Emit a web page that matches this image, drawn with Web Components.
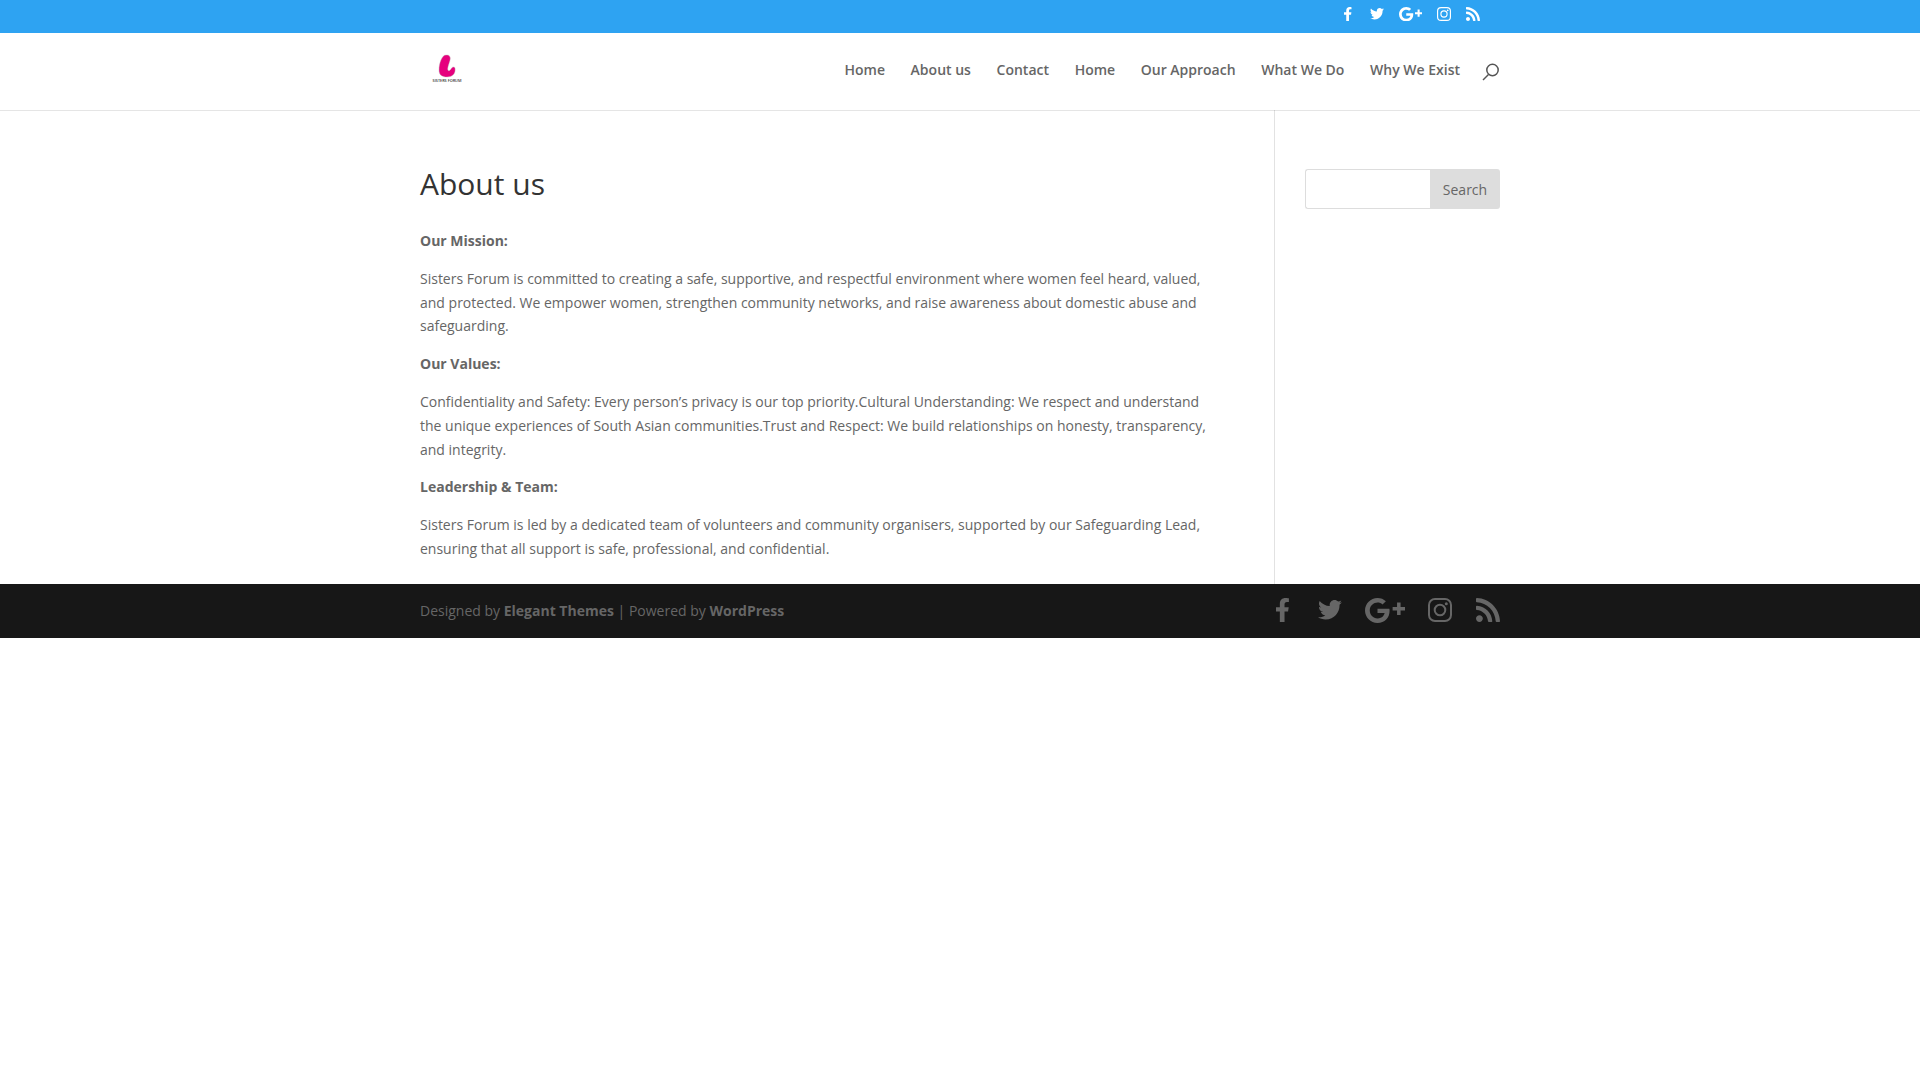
<!DOCTYPE html>
<html><head><meta charset="utf-8"><style>
html,body{margin:0;background:#fff;font-family:"Open Sans",sans-serif}
</style></head><body>
<top-bar></top-bar>
<main-header></main-header>
<page-content></page-content>
<page-footer></page-footer>
<script>
const ICONS={
fb:['22 0 271 512','<path d="M279 288l14-93h-89v-60c0-25 12-50 52-50h41V6s-37-6-72-6c-73 0-121 44-121 125v70H22v93h82v224h100V288z"/>'],
tw:['0 48 512 416','<path d="M459 152c.3 4.500.3 9 .3 13.600 0 138.700-105.600 298.600-298.600 298.600-59.500 0-114.700-17.200-161.100-47.100 8.400 1 16.600 1.300 25.300 1.300 49.100 0 94.200-16.600 130.300-44.800-46.100-1-84.800-31.200-98.100-72.800 6.500 1 13 1.600 19.800 1.600 9.400 0 18.800-1.300 27.600-3.600-48.100-9.700-84.100-52-84.100-103v-1.300c14 7.800 30.200 12.700 47.400 13.300-28.300-18.800-46.800-51-46.800-87.400 0-19.500 5.200-37.400 14.300-53 51.700 63.700 129.300 105.300 216.400 109.800-1.600-7.800-2.600-15.900-2.600-24 0-57.800 46.800-104.900 104.900-104.900 30.200 0 57.500 12.700 76.700 33.100 23.700-4.500 46.500-13.300 66.600-25.300-7.800 24-24.400 44.200-46.100 57.200 21.100-2.300 41.600-8.100 60.400-16.200-14.300 20.800-32.200 39.300-52.600 54.300z"/>'],
gp:['0 8 794 496','<path d="M488 261.800C488 403.300 391.100 504 248 504 110.800 504 0 393.200 0 256S110.800 8 248 8c66.800 0 123 24.500 166.300 64.900l-67.500 64.900C258.500 52.600 94.300 116.600 94.300 256c0 86.500 69.100 156.600 153.700 156.600 98.200 0 135-70.400 140.800-106.900H248v-85.300h236.100c2.300 12.700 3.900 24.900 3.900 41.400z"/><path d="M794 185h-88v-88h-70v88h-88v70h88v88h70v-88h88z"/>'],
ig:['0 0 24 24','<rect x="1" y="1" width="22" height="22" rx="6" fill="none" stroke="currentColor" stroke-width="2"/><circle cx="12" cy="12" r="5.300" fill="none" stroke="currentColor" stroke-width="2"/><circle cx="18.300" cy="5.700" r="1.500"/>'],
rss:['0 32 448 448','<path d="M128 416c0 35-29 64-64 64S0 451 0 416s29-64 64-64 64 29 64 64zm176 48c-8-155-132-279-287-288-9 0-17 7-17 16v48c0 8 7 15 15 16 111 7 201 97 209 209 1 8 8 15 16 15h48c9 0 17-8 16-16zm144 0C440 230 250 40 17 32 8 32 0 39 0 48v48c0 9 7 16 15 16 191 8 345 162 353 353 0 8 7 15 16 15h48c9 0 16-8 16-16z"/>']};
function icon(k,h,c,cls){const [vb,d]=ICONS[k];const p=vb.split(' ');const w=k=='tw'?h*1.0:h*p[2]/p[3];const hh=k=='tw'?w*p[3]/p[2]:h;
 return `<svg class="${cls||''}" width="${w}" height="${hh}" viewBox="${vb}" fill="${c}" color="${c}" style="display:block"><g>${d}</g></svg>`}
function def(name,html){customElements.define(name,class extends HTMLElement{constructor(){super();this.attachShadow({mode:'open'}).innerHTML=html}})}
const WRAP='width:1080px;margin:0 auto;';
def('top-bar',`<style>:host{display:block;height:33px;background:#2ea3f2}
.w{${WRAP}display:flex;justify-content:flex-end;align-items:center;height:28px;gap:15px;padding-right:20px;box-sizing:border-box}
.f{margin-right:3px}
</style><div class="w">${icon('fb',14,'#fff','f')}${icon('tw',14,'#fff')}${icon('gp',14.500,'#fff')}${icon('ig',14,'#fff')}${icon('rss',14,'#fff')}</div>`);
def('main-header',`<style>:host{display:block;height:77px;background:#fff;box-shadow:0 1px 0 rgba(0,0,0,.1);position:relative}
.w{${WRAP}display:flex;align-items:flex-start;height:77px}
.logo{width:50px;height:43px;margin-top:14px;margin-right:auto;display:block}
.logo text{font:600 3.800px "Open Sans",sans-serif;fill:#333}
nav{display:flex;gap:25.640px;margin-top:26px;font-size:14px;font-weight:600;color:#666;line-height:21px}
.s{margin:30px 1px 0 22px}
</style><div class="w"><svg class="logo" viewBox="0 0 50 43"><path d="M26 8C22 8 19 16 19 23C19 28 22 30 27 30C32 30 36 27 35 21C34 19 32 20 31 22C29 25 27 24 28 20C29 16 31 12 30 10C29 8 28 8 26 8Z" fill="#e6007e" stroke="#bbb" stroke-width=".4"/><text x="27" y="34.500" text-anchor="middle">SISTERS FORUM</text></svg>
<nav><span>Home</span><span>About us</span><span>Contact</span><span>Home</span><span>Our Approach</span><span>What We Do</span><span>Why We Exist</span></nav>
<svg class="s" width="17" height="18" viewBox="0 0 17 18" fill="none" stroke="#555" stroke-width="1.500"><circle cx="10.500" cy="7" r="5.700"/><path d="M6.500 11.500L1 17"/></svg></div>`);
def('page-content',`<style>:host{display:block}
.w{${WRAP}display:flex;height:474px;font-size:14px;line-height:23.800px;color:#666}
article{width:854px;padding:56px 59px 0 0;box-sizing:border-box}
aside{border-left:1px solid #e2e2e2;flex:1;padding:59px 0 0 30px;box-sizing:border-box}
h1{margin:0 0 27px;font-size:30px;line-height:36px;font-weight:400;color:#333}
p{margin:0 0 14px}b{font-weight:700}
.f{display:flex}.i{width:125px;height:40px;box-sizing:border-box;border:1px solid #ddd;border-right:0;border-radius:3px 0 0 3px}
.b{width:70px;height:40px;box-sizing:border-box;padding-top:1px;background:#ddd;color:#666;font-size:14px;display:flex;align-items:center;justify-content:center;border-radius:0 3px 3px 0}
</style><div class="w"><article><h1>About us</h1>
<p><b>Our Mission:</b></p>
<p>Sisters Forum is committed to creating a safe, supportive, and respectful environment where women feel heard, valued, and protected. We empower women, strengthen community networks, and raise awareness about domestic abuse and safeguarding.</p>
<p><b>Our Values:</b></p>
<p>Confidentiality and Safety: Every person’s privacy is our top priority.Cultural Understanding: We respect and understand the unique experiences of South Asian communities.Trust and Respect: We build relationships on honesty, transparency, and integrity.</p>
<p><b>Leadership &amp; Team:</b></p>
<p>Sisters Forum is led by a dedicated team of volunteers and community organisers, supported by our Safeguarding Lead, ensuring that all support is safe, professional, and confidential.</p>
</article><aside><div class="f"><div class="i"></div><div class="b">Search</div></div></aside></div>`);
def('page-footer',`<style>:host{display:block;height:54px;background:#171717}
.w{${WRAP}display:flex;align-items:center;height:54px;padding-bottom:2px;box-sizing:border-box;font-size:14px;color:#666}
b{color:#666;font-weight:700}.t{margin-right:auto}.ic{display:flex;gap:23px;align-items:center}
.f{margin-right:6px}.n{margin-right:1px}
</style><div class="w"><span class="t">Designed by <b>Elegant Themes</b> | Powered by <b>WordPress</b></span>
<div class="ic">${icon('fb',24,'#666','f')}${icon('tw',24,'#666')}${icon('gp',25,'#666')}${icon('ig',24,'#666','n')}${icon('rss',24,'#666')}</div></div>`);
</script></body></html>
